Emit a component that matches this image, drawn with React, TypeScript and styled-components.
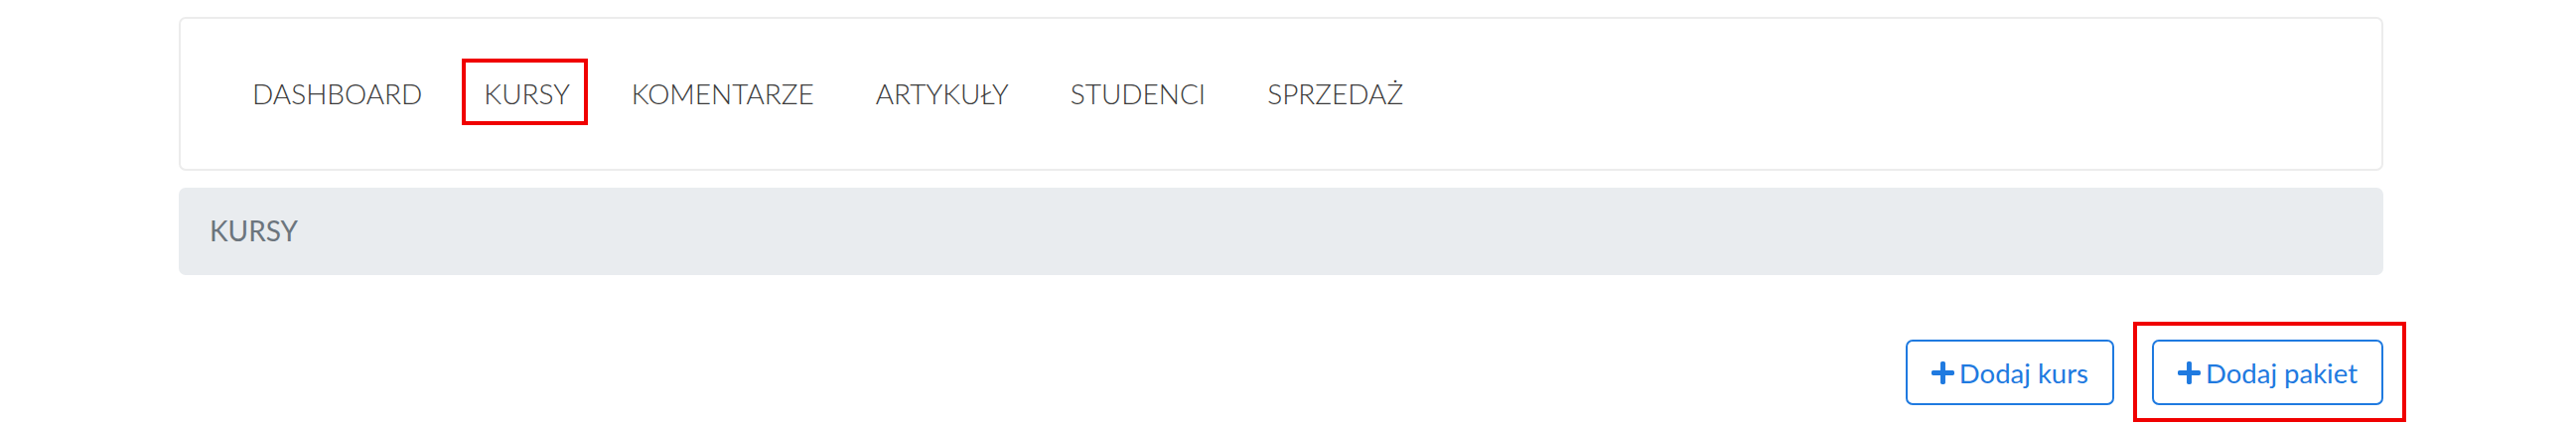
import React from "react";
import styled, { createGlobalStyle } from "styled-components";

const GlobalStyle = createGlobalStyle`
  html, body {
    margin: 0;
    padding: 0;
    background: #ffffff;
    font-family: Lato, "Open Sans", Arial, sans-serif;
  }
  * { box-sizing: border-box; }
`;

const Page = styled.div`
  padding: 17px 194px 20px 180px;
  display: flex;
  flex-direction: column;
`;

const Card = styled.div`
  height: 155px;
  border: 2px solid #ececec;
  border-radius: 7px;
  background: #fff;
  display: flex;
  align-items: center;
  padding-left: 41px;
`;

const NavList = styled.ul`
  list-style: none;
  margin: 0;
  padding: 0;
  display: flex;
  align-items: center;
`;

const NavItem = styled.li`
  padding: 0 31px;
  font-size: 28px;
  line-height: 1.2;
  font-weight: 300;
  color: #3b3b3b;
  text-transform: uppercase;
`;

const Highlight = styled.span<{ $t: number; $r: number; $b: number; $l: number }>`
  position: relative;
  display: inline-block;
  &::after {
    content: "";
    position: absolute;
    top: ${(p) => p.$t}px;
    right: ${(p) => p.$r}px;
    bottom: ${(p) => p.$b}px;
    left: ${(p) => p.$l}px;
    border: 4px solid #f00000;
    pointer-events: none;
  }
`;

const Breadcrumb = styled.div`
  margin-top: 17px;
  height: 88px;
  background: #e9ecef;
  border-radius: 7px;
  display: flex;
  align-items: center;
  padding-left: 31px;
  font-size: 28px;
  line-height: 1.2;
  color: #6c757d;
`;

const Actions = styled.div`
  margin-top: 65px;
  display: flex;
  justify-content: flex-end;
  gap: 38px;
`;

const OutlineButton = styled.button`
  height: 66px;
  display: inline-flex;
  align-items: center;
  gap: 5px;
  padding: 0 24px;
  border: 2px solid #1f7ae0;
  border-radius: 7px;
  background: #fff;
  color: #1f7ae0;
  font-family: Lato, "Open Sans", Arial, sans-serif;
  font-size: 27.5px;
  line-height: 1.2;
  cursor: pointer;
`;

const PlusIcon = () => (
  <svg width="23" height="23" viewBox="0 32 448 448" fill="currentColor" aria-hidden="true">
    <path d="M416 208H272V64c0-17.67-14.33-32-32-32h-32c-17.67 0-32 14.33-32 32v144H32c-17.67 0-32 14.33-32 32v32c0 17.67 14.33 32 32 32h144v144c0 17.67 14.33 32 32 32h32c17.67 0 32-14.33 32-32V304h144c17.67 0 32-14.33 32-32v-32c0-17.67-14.33-32-32-32z" />
  </svg>
);

const navItems = ["Dashboard", "Kursy", "Komentarze", "Artykuły", "Studenci", "Sprzedaż"];

export default function App() {
  return (
    <>
      <GlobalStyle />
      <Page>
        <Card>
          <NavList>
            {navItems.map((item) => (
              <NavItem key={item}>
                {item === "Kursy" ? (
                  <Highlight $t={-19} $r={-18} $b={-15} $l={-22}>
                    {item}
                  </Highlight>
                ) : (
                  item
                )}
              </NavItem>
            ))}
          </NavList>
        </Card>
        <Breadcrumb>KURSY</Breadcrumb>
        <Actions>
          <OutlineButton>
            <PlusIcon />
            Dodaj kurs
          </OutlineButton>
          <Highlight $t={-18} $r={-23} $b={-17} $l={-19}>
            <OutlineButton>
              <PlusIcon />
              Dodaj pakiet
            </OutlineButton>
          </Highlight>
        </Actions>
      </Page>
    </>
  );
}
